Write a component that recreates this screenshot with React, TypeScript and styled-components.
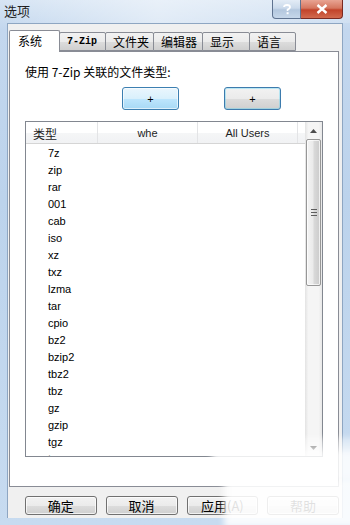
import React from "react";
import styled, { createGlobalStyle } from "styled-components";

const Global = createGlobalStyle`
  html, body { margin: 0; padding: 0; background: #fff; }
  body { width: 350px; height: 525px; overflow: hidden; }
  * { box-sizing: border-box; }
`;

const CJK = `"Noto Sans CJK SC", "Noto Sans", sans-serif`;
const UI = `"Liberation Sans", "Noto Sans CJK SC", sans-serif`;

const Window = styled.div`
  position: relative;
  width: 350px;
  height: 525px;
  display: flex;
  flex-direction: column;
  background: linear-gradient(180deg, #d7e5f4 0px, #c3d7ee 30px, #bcd3ec 200px, #c7dbf0 525px);
  overflow: hidden;
`;

const TitleBar = styled.div`
  height: 23px;
  display: flex;
  align-items: flex-start;
  padding-left: 4px;
  background: linear-gradient(90deg, rgba(255,255,255,0.0) 0%, rgba(255,255,255,0.45) 45%, rgba(255,255,255,0.15) 100%);
`;

const Title = styled.div`
  font-family: ${CJK};
  font-size: 13px;
  line-height: 13px;
  color: #1e1e1e;
  margin-top: 4px;
`;

const Caption = styled.div`
  margin-left: auto;
  margin-right: 7px;
  display: flex;
`;

const CapBtn = styled.div<{ $close?: boolean }>`
  height: 19px;
  width: ${(p) => (p.$close ? "42px" : "29px")};
  border: 1px solid ${(p) => (p.$close ? "#7a2a22" : "#5f7390")};
  border-top: none;
  border-left: ${(p) => (p.$close ? "none" : undefined)};
  border-radius: ${(p) => (p.$close ? "0 0 4px 0" : "0 0 0 4px")};
  background: ${(p) =>
    p.$close
      ? "linear-gradient(180deg, #e8a493 0%, #d5775f 45%, #c2432a 55%, #d26a4e 100%)"
      : "linear-gradient(180deg, #e3ecf6 0%, #cbdaeb 45%, #b3c7de 55%, #c6d7ea 100%)"};
  display: flex;
  align-items: center;
  justify-content: center;
`;

const Body = styled.div`
  flex: 1;
  margin: 0 7px 7px 7px;
  background: #f0f0f0;
  border: 1px solid #8ea6c2;
  border-bottom: none;
  display: flex;
  flex-direction: column;
  padding: 6px 3px 0 1px;
`;

const TabRow = styled.div`
  display: flex;
  align-items: flex-end;
  height: 21px;
  position: relative;
  z-index: 1;
`;

const Tab = styled.div<{ $active?: boolean; $w: number; $mono?: boolean }>`
  width: ${(p) => p.$w}px;
  height: ${(p) => (p.$active ? "22px" : "19px")};
  margin-bottom: ${(p) => (p.$active ? "-1px" : "0")};
  border: 1px solid #898c95;
  border-bottom: ${(p) => (p.$active ? "none" : "1px solid #898c95")};
  margin-left: ${(p) => (p.$active ? "0" : "-1px")};
  background: ${(p) =>
    p.$active ? "#ffffff" : "linear-gradient(180deg, #f2f2f2 0%, #ebebeb 50%, #dddddd 51%, #cfcfcf 100%)"};
  border-radius: 2px 2px 0 0;
  font-family: ${(p) => (p.$mono ? `"Liberation Mono", monospace` : CJK)};
  font-size: ${(p) => (p.$mono ? "10px" : "12px")};
  font-weight: ${(p) => (p.$mono ? "bold" : "normal")};
  color: #000;
  display: flex;
  align-items: center;
  padding-left: ${(p) => (p.$active ? "8px" : "7px")};
  padding-bottom: ${(p) => (p.$active ? "2px" : "0")};
  &:first-child { margin-left: 0; }
`;

const Panel = styled.div`
  height: 436px;
  background: #ffffff;
  border: 1px solid #898c95;
  display: flex;
  flex-direction: column;
  padding: 13px 15px 0 15px;
`;

const Label = styled.div`
  font-family: ${CJK};
  font-size: 12px;
  line-height: 14px;
  color: #000;
`;

const PlusRow = styled.div`
  display: flex;
  gap: 45px;
  padding-left: 97px;
  margin-top: 8px;
`;

const PlusBtn = styled.div<{ $hot?: boolean }>`
  width: 57px;
  height: 23px;
  border: 1px solid ${(p) => (p.$hot ? "#3c7fb1" : "#3d7bad")};
  border-radius: 3px;
  background: ${(p) =>
    p.$hot
      ? "linear-gradient(180deg, #eaf6fd 0%, #d9f0fc 50%, #bee6fd 51%, #a7d9f5 100%)"
      : "linear-gradient(180deg, #f2f2f2 0%, #ebebeb 50%, #dddddd 51%, #cfcfcf 100%)"};
  box-shadow: inset 0 0 0 1px ${(p) => (p.$hot ? "rgba(255,255,255,0.6)" : "#48d1fa55")};
  display: flex;
  align-items: center;
  justify-content: center;
  font-family: ${UI};
  font-size: 11px;
  color: #000;
`;

const ListBox = styled.div`
  margin-top: 11px;
  width: 298px;
  height: 336px;
  border: 1px solid #828790;
  display: flex;
  background: #fff;
`;

const ListMain = styled.div`
  flex: 1;
  display: flex;
  flex-direction: column;
  overflow: hidden;
`;

const Header = styled.div`
  height: 22px;
  flex: none;
  display: flex;
  border-bottom: 1px solid #d5d5d5;
  background: linear-gradient(180deg, #ffffff 0%, #ffffff 50%, #f5f6f7 51%, #f1f2f4 100%);
`;

const HeadCell = styled.div<{ $w: number; $left?: boolean }>`
  width: ${(p) => p.$w}px;
  flex: none;
  border-right: 1px solid #e3e4e6;
  display: flex;
  align-items: center;
  justify-content: ${(p) => (p.$left ? "flex-start" : "center")};
  padding-left: ${(p) => (p.$left ? "7px" : "0")};
  padding-top: 1px;
  font-family: ${(p) => (p.$left ? CJK : UI)};
  font-size: ${(p) => (p.$left ? "12px" : "11px")};
  color: #1e1e1e;
`;

const Rows = styled.div`
  display: flex;
  flex-direction: column;
`;

const Row = styled.div`
  height: 17px;
  flex: none;
  display: flex;
  align-items: center;
  padding-left: 22px;
  font-family: ${UI};
  font-size: 11px;
  color: #000;
`;

const ScrollBar = styled.div`
  width: 17px;
  flex: none;
  display: flex;
  flex-direction: column;
  background: linear-gradient(90deg, #e3e3e3 0%, #f5f5f5 20%, #f5f5f5 80%, #e8e8e8 100%);
`;

const Arrow = styled.div`
  height: 17px;
  flex: none;
  display: flex;
  align-items: center;
  justify-content: center;
`;

const Track = styled.div`
  flex: 1;
  display: flex;
  flex-direction: column;
`;

const Thumb = styled.div`
  height: 147px;
  margin: 0 1px;
  border: 1px solid #979797;
  border-radius: 2px;
  background: linear-gradient(90deg, #f4f4f4 0%, #ebebeb 45%, #d9d9d9 55%, #cbcbcb 100%);
  box-shadow: inset 0 0 0 1px rgba(255, 255, 255, 0.7);
  display: flex;
  align-items: center;
  justify-content: center;
`;

const Grip = styled.div`
  width: 6px;
  height: 7px;
  border-top: 1px solid #5e5e5e;
  border-bottom: 1px solid #5e5e5e;
  position: relative;
  &::after {
    content: "";
    position: absolute;
    left: 0;
    right: 0;
    top: 2px;
    border-top: 1px solid #5e5e5e;
  }
`;

const BtnRow = styled.div`
  display: flex;
  gap: 9px;
  padding-left: 16px;
  margin-top: 9px;
`;

const DlgBtn = styled.div`
  width: 72px;
  height: 19px;
  border: 1px solid #707070;
  border-radius: 3px;
  background: linear-gradient(180deg, #f2f2f2 0%, #ebebeb 50%, #dddddd 51%, #cfcfcf 100%);
  box-shadow: inset 0 0 0 1px rgba(255, 255, 255, 0.7);
  display: flex;
  align-items: center;
  justify-content: center;
  font-family: ${CJK};
  font-size: 13px;
  color: #000;
`;

const Haze = styled.div<{ $l: number; $t: number; $w: number; $h: number; $a: number }>`
  position: absolute;
  left: ${(p) => p.$l}px;
  top: ${(p) => p.$t}px;
  width: ${(p) => p.$w}px;
  height: ${(p) => p.$h}px;
  background: rgba(255, 255, 255, ${(p) => p.$a});
  filter: blur(3px);
  pointer-events: none;
`;

const types = [
  "7z", "zip", "rar", "001", "cab", "iso", "xz", "txz", "lzma", "tar",
  "cpio", "bz2", "bzip2", "tbz2", "tbz", "gz", "gzip", "tgz", "tpz",
];

export default function App() {
  return (
    <>
      <Global />
      <Window>
        <TitleBar>
          <Title>选项</Title>
          <Caption>
            <CapBtn>
              <svg width="8" height="11" viewBox="0 0 8 11">
                <path d="M1 3 Q1 1 4 1 Q7 1 7 3.2 Q7 4.6 4.6 5.6 L4.6 7" fill="none" stroke="#fff" strokeWidth="1.8" />
                <rect x="3.6" y="8.2" width="2" height="2" fill="#fff" />
              </svg>
            </CapBtn>
            <CapBtn $close>
              <svg width="12" height="10" viewBox="0 0 12 10">
                <path d="M1.5 1 L10.5 9 M10.5 1 L1.5 9" stroke="#fff" strokeWidth="2.4" />
              </svg>
            </CapBtn>
          </Caption>
        </TitleBar>
        <Body>
          <TabRow>
            <Tab $active $w={51}>系统</Tab>
            <Tab $w={47} $mono>7-Zip</Tab>
            <Tab $w={49}>文件夹</Tab>
            <Tab $w={50}>编辑器</Tab>
            <Tab $w={48}>显示</Tab>
            <Tab $w={47}>语言</Tab>
          </TabRow>
          <Panel>
            <Label>使用 7-Zip 关联的文件类型:</Label>
            <PlusRow>
              <PlusBtn $hot>+</PlusBtn>
              <PlusBtn>+</PlusBtn>
            </PlusRow>
            <ListBox>
              <ListMain>
                <Header>
                  <HeadCell $w={72} $left>类型</HeadCell>
                  <HeadCell $w={100}>whe</HeadCell>
                  <HeadCell $w={100}>All Users</HeadCell>
                </Header>
                <Rows>
                  {types.map((t) => (
                    <Row key={t}>{t}</Row>
                  ))}
                </Rows>
              </ListMain>
              <ScrollBar>
                <Arrow>
                  <svg width="7" height="4" viewBox="0 0 7 4">
                    <path d="M0 4 L3.5 0 L7 4 Z" fill="#4d4d4d" />
                  </svg>
                </Arrow>
                <Track>
                  <Thumb>
                    <Grip />
                  </Thumb>
                </Track>
                <Arrow>
                  <svg width="7" height="4" viewBox="0 0 7 4">
                    <path d="M0 0 L3.5 4 L7 0 Z" fill="#4d4d4d" />
                  </svg>
                </Arrow>
              </ScrollBar>
            </ListBox>
          </Panel>
          <BtnRow>
            <DlgBtn>确定</DlgBtn>
            <DlgBtn>取消</DlgBtn>
            <DlgBtn>应用(A)</DlgBtn>
            <DlgBtn>帮助</DlgBtn>
          </BtnRow>
        </Body>
        <Haze $l={212} $t={449} $w={150} $h={32} $a={0.85} />
        <Haze $l={224} $t={478} $w={140} $h={50} $a={0.88} />
        <Haze $l={300} $t={438} $w={60} $h={14} $a={0.5} />
      </Window>
    </>
  );
}
